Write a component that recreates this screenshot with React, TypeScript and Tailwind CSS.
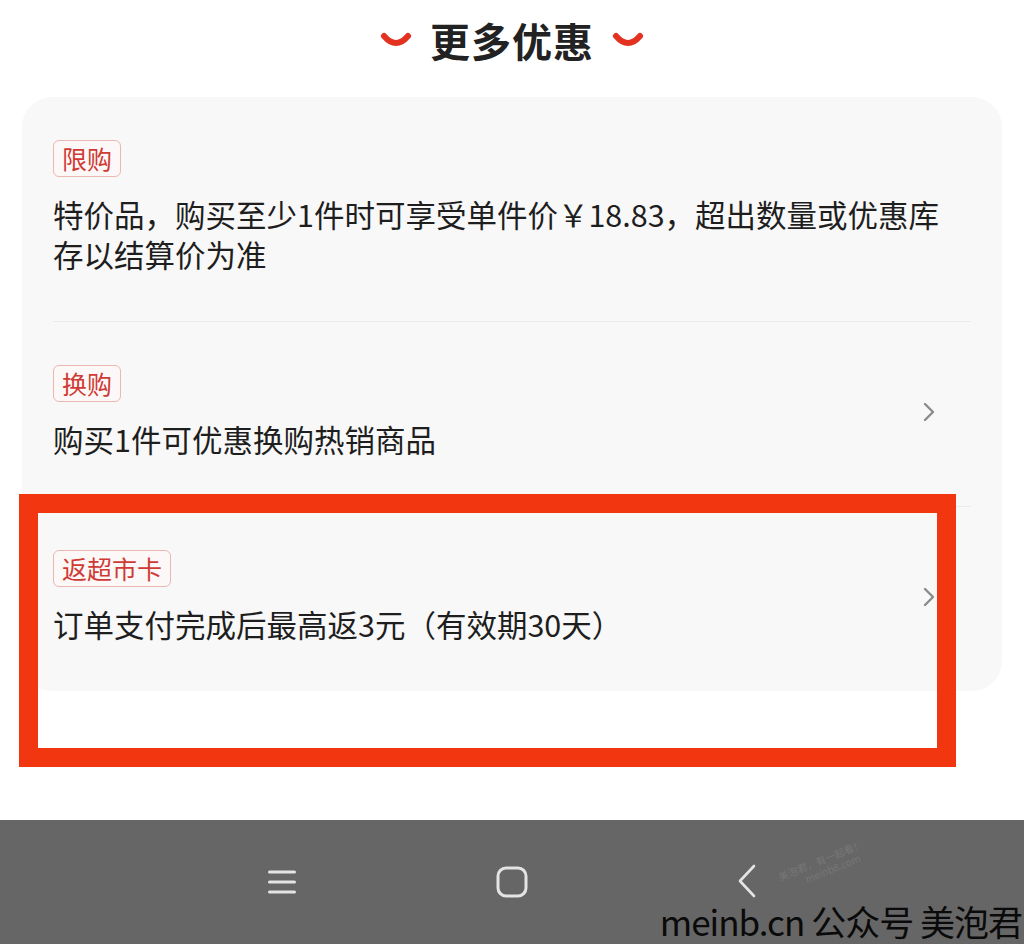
import React from "react";

const FONT = { fontFamily: '"Noto Sans CJK SC", "Noto Sans", sans-serif' };

function Smile() {
  return (
    <svg width="32" height="16" viewBox="0 0 32 16" className="block">
      <path d="M4 4 Q16 18 28 4" fill="none" stroke="#e3321f" strokeWidth="6" strokeLinecap="round" />
    </svg>
  );
}

function Tag({ children }: { children: React.ReactNode }) {
  return (
    <span className="inline-flex h-[37px] items-center rounded-[6px] border border-[#eab7b2] bg-[#fcf8f8] px-[8px] text-[25px] leading-none text-[#cf3b34]">
      {children}
    </span>
  );
}

function Chevron() {
  return (
    <svg width="14" height="22" viewBox="0 0 14 22" className="block">
      <polyline points="3,3 11,11 3,19" fill="none" stroke="#8a8a8a" strokeWidth="2.4" strokeLinecap="round" strokeLinejoin="round" />
    </svg>
  );
}

function Item({
  tag,
  children,
  arrow,
  last,
}: {
  tag: string;
  children: React.ReactNode;
  arrow?: boolean;
  last?: boolean;
}) {
  return (
    <div className={last ? "" : "border-b border-[#ebebeb]"}>
      <div className="flex items-center pt-[43px] pb-[47px]">
        <div className="flex-1">
          <Tag>{tag}</Tag>
          <div className="mt-[17px] text-[30.5px] leading-[40px] text-[#1e1e1e]">{children}</div>
        </div>
        {arrow && (
          <div className="mr-[35px]">
            <Chevron />
          </div>
        )}
      </div>
    </div>
  );
}

export default function App() {
  return (
    <div className="relative flex h-[944px] w-[1024px] flex-col overflow-hidden bg-white" style={FONT}>
      <div className="flex h-[80px] items-center justify-center">
        <Smile />
        <div className="mx-[18px] text-[40px] font-bold leading-none tracking-[1px] text-[#222]">更多优惠</div>
        <Smile />
      </div>

      <div className="mx-[22px] mt-[17px] rounded-[30px] bg-[#f8f8f8] px-[31px]">
        <Item tag="限购">
          特价品，购买至少1件时可享受单件价￥18.83，超出数量或优惠库
          <br />
          存以结算价为准
        </Item>
        <Item tag="换购" arrow>
          购买1件可优惠换购热销商品
        </Item>
        <Item tag="返超市卡" arrow last>
          订单支付完成后最高返3元（有效期30天）
        </Item>
      </div>

      <div className="flex-1" />

      <div className="relative flex h-[124px] items-center bg-[#666666] pl-[268px]">
        <svg width="28" height="26" viewBox="0 0 28 26" className="block">
          <line x1="1.5" y1="3" x2="26.5" y2="3" stroke="#e4e4e4" strokeWidth="3" strokeLinecap="round" />
          <line x1="1.5" y1="13" x2="26.5" y2="13" stroke="#e4e4e4" strokeWidth="3" strokeLinecap="round" />
          <line x1="1.5" y1="23" x2="26.5" y2="23" stroke="#e4e4e4" strokeWidth="3" strokeLinecap="round" />
        </svg>
        <svg width="32" height="32" viewBox="0 0 32 32" className="ml-[200px] block">
          <rect x="2" y="2" width="28" height="28" rx="8" fill="none" stroke="#e4e4e4" strokeWidth="3" />
        </svg>
        <svg width="20" height="34" viewBox="0 0 20 34" className="ml-[209px] -mt-[3px] block">
          <polyline points="17,2 3,17 17,32" fill="none" stroke="#e4e4e4" strokeWidth="2.6" strokeLinecap="round" strokeLinejoin="round" />
        </svg>

        <div className="absolute left-[778px] top-[34px] -rotate-[22deg] text-[10px] leading-[12px] text-[#777777]">
          美泡君，有一起看！
          <br />
          <span className="pl-[24px]">meinb8.com</span>
        </div>

        <div className="absolute right-[2px] bottom-[6px] text-[35px] leading-none tracking-[-1px] text-[#0a0a0a]">
          meinb.cn 公众号 美泡君
        </div>
      </div>

      <div className="absolute left-[19px] top-[494px] h-[273px] w-[937px] border-[19px] border-[#f2360f]" />
    </div>
  );
}
